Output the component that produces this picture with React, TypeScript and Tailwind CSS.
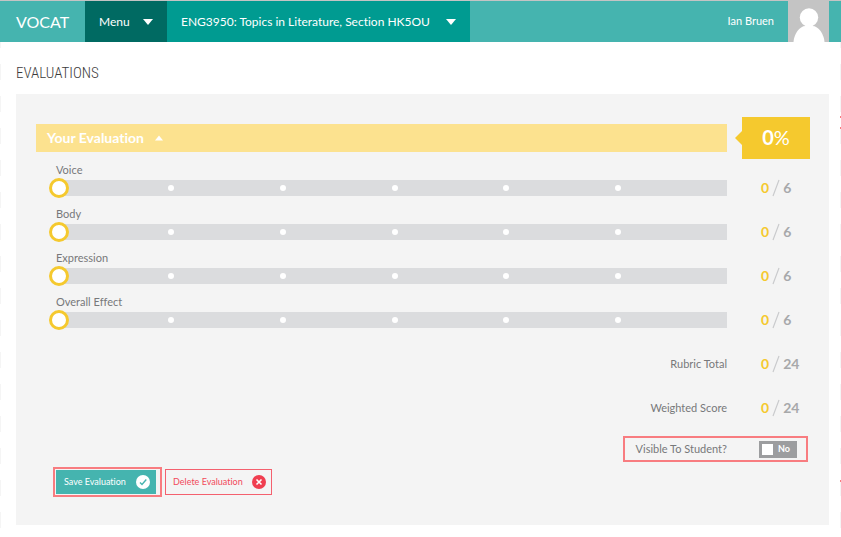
import React from "react";

const criteria = ["Voice", "Body", "Expression", "Overall Effect"];

function Caret({ up = false, className = "" }: { up?: boolean; className?: string }) {
  return (
    <svg viewBox="0 0 10 6" className={className} fill="currentColor" aria-hidden="true">
      <path d={up ? "M0 6 5 0l5 6z" : "M0 0h10L5 6z"} />
    </svg>
  );
}

function Score({ value, max }: { value: number; max: number }) {
  return (
    <div className="flex h-4 items-center pb-px pl-[34px] text-[14px] font-bold text-[#a7a8aa]">
      <span className="text-[#f5c92e]">{value}</span>
      <svg viewBox="0 0 8 18" className="mx-[3px] h-[18px] w-2 shrink-0" aria-hidden="true">
        <path d="M7 1 1 17" stroke="#c9cacc" strokeWidth="1.2" />
      </svg>
      <span>{max}</span>
    </div>
  );
}

function SliderRow({ name }: { name: string }) {
  const id = name.toLowerCase().replace(" ", "-");
  return (
    <div className="grid h-11 grid-cols-[1fr_83px] items-end pb-2">
      <div className="pl-5">
        <label htmlFor={id} className="block text-[11px] leading-5 text-[#77787a]">
          {name}
        </label>
        <div className="ml-[3px] grid h-4 bg-[#dbdcde]">
          <div className="col-start-1 row-start-1 -mr-[3px] grid grid-cols-6 items-center">
            {[1, 2, 3, 4, 5].map((n) => (
              <span key={n} className="-mr-[3px] size-[6px] justify-self-end rounded-full bg-white" />
            ))}
          </div>
          <input
            id={id}
            type="range"
            min={0}
            max={6}
            defaultValue={0}
            className="relative col-start-1 row-start-1 -mx-[10px] h-4 appearance-none bg-transparent [&::-webkit-slider-thumb]:size-5 [&::-webkit-slider-thumb]:appearance-none [&::-webkit-slider-thumb]:rounded-full [&::-webkit-slider-thumb]:border-3 [&::-webkit-slider-thumb]:border-[#f5c92e] [&::-webkit-slider-thumb]:bg-white"
          />
        </div>
      </div>
      <Score value={0} max={6} />
    </div>
  );
}

function TotalRow({ name, max }: { name: string; max: number }) {
  return (
    <div className="grid h-11 grid-cols-[1fr_83px] items-center">
      <span className="text-right text-[11px] text-[#77787a]">{name}</span>
      <Score value={0} max={max} />
    </div>
  );
}

const edge =
  "pointer-events-none absolute inset-y-0 w-px bg-[repeating-linear-gradient(to_bottom,#f5f5f5_0px,#f5f5f5_16px,transparent_16px,transparent_32px)]";

export default function App() {
  return (
    <div className="relative min-h-screen bg-white font-['Lato','Liberation_Sans',sans-serif] [font-variant-ligatures:no-common-ligatures]">
      <div className={edge + " left-0"} />
      <div className={edge + " right-0"}>
        <span className="absolute top-[116px] h-0.5 w-px bg-[#f87c80]" />
        <span className="absolute top-[127px] h-0.5 w-px bg-[#f87c80]" />
        <span className="absolute top-[480px] h-0.5 w-px bg-[#f87c80]" />
      </div>

      <header className="relative flex h-[42px] items-stretch border-t border-[#c4c4c4] bg-[#45b4af] pr-3 text-white">
        <a href="#" className="flex w-[85px] items-center pl-4 text-[16px]">
          VOCAT
        </a>
        <button className="flex w-[82px] items-center bg-[#006a62] pl-[14px] text-[12px]">
          Menu
          <Caret className="ml-auto mr-[14px] h-[6px] w-[10px]" />
        </button>
        <button className="flex w-[303px] items-center whitespace-nowrap bg-[#009b91] pl-[14px] text-[12px]">
          ENG3950: Topics in Literature, Section HK5OU
          <Caret className="ml-auto mr-[14px] h-[6px] w-[10px]" />
        </button>
        <a href="#" className="ml-auto flex items-center pr-[14px] text-[11px]">
          Ian Bruen
        </a>
        <svg viewBox="0 0 41 41" className="w-[41px]" role="img" aria-label="Ian Bruen">
          <path fill="#c4c4c4" d="M0 0h41v41H0z" />
          <circle cx="21" cy="16.500" r="9.200" fill="#fff" />
          <path fill="#fff" d="M5.500 41c.5-8 6-16 12-16h7c6 0 11.500 8 12 16z" />
        </svg>
      </header>

      <main className="pl-4 pr-3">
        <h1 className="pt-[21px] text-[15px] font-light leading-[20px] text-[#3c3c3c] font-['Roboto_Condensed','Liberation_Sans_Narrow','Open_Sans_Condensed_Light',sans-serif]">
          EVALUATIONS
        </h1>

        <section className="mt-[11px] bg-[#f4f4f4] pb-7 pl-5 pr-[19px] pt-[23px]">
          <div className="mb-px flex items-center">
            <button className="flex h-7 flex-1 items-center bg-[#fce28f] pb-0.5 pl-[11px] text-[14px] font-bold text-white">
              Your Evaluation
              <Caret up className="ml-[11px] mt-0.5 h-[6px] w-2" />
            </button>
            <div className="ml-2 flex items-center">
              <svg viewBox="0 0 7 14" className="h-[14px] w-[7px]" fill="#f5c92e" aria-hidden="true">
                <path d="M7 0v14L0 7z" />
              </svg>
              <div className="flex h-[42px] w-[68px] items-center justify-center bg-[#f5c92e] pb-0.5 text-[20px] text-white">
                <span>
                  <span className="font-bold">0</span>%
                </span>
              </div>
            </div>
          </div>

          {criteria.map((name) => (
            <SliderRow key={name} name={name} />
          ))}

          <div className="mt-1.5">
            <TotalRow name="Rubric Total" max={24} />
            <TotalRow name="Weighted Score" max={24} />
          </div>

          <label className="ml-auto mr-0.5 mt-1.5 flex h-[26px] w-fit items-center gap-8 border-2 border-[#f87c80] pl-[11px] pr-[9px] text-[11px] text-[#77787a]">
            Visible To Student?
            <span className="flex h-[17px] w-[38px] items-center bg-[#9c9d9f] pl-[3px] text-[9px] font-bold text-white">
              <input type="checkbox" className="mr-[5px] size-[11px] appearance-none bg-white" />
              No
            </span>
          </label>

          <div className="ml-[17px] mt-[5px] flex items-center gap-[3px]">
            <div className="flex h-[30px] w-[109px] border-2 border-[#f87c80] py-px pl-px">
              <button className="flex w-[100px] items-center justify-between bg-[#45b4af] pl-2 pr-1.5 text-[9px] text-white">
                Save Evaluation
                <svg viewBox="0 0 14 14" className="size-[14px]" aria-hidden="true">
                  <circle cx="7" cy="7" r="7" fill="#fff" />
                  <path d="M4 7.500 6 9.500 10.300 4.500" fill="none" stroke="#45b4af" strokeWidth="1.400" />
                </svg>
              </button>
            </div>
            <button className="flex h-[26px] w-[107px] items-center justify-between border border-[#f4606e] pl-[7px] pr-[5px] text-[9px] text-[#f24a5b]">
              Delete Evaluation
              <svg viewBox="0 0 14 14" className="size-[14px]" aria-hidden="true">
                <circle cx="7" cy="7" r="7" fill="#f03e50" />
                <path d="m4.500 4.500 5 5m0-5-5 5" stroke="#fff" strokeWidth="1.600" />
              </svg>
            </button>
          </div>
        </section>
      </main>
    </div>
  );
}
